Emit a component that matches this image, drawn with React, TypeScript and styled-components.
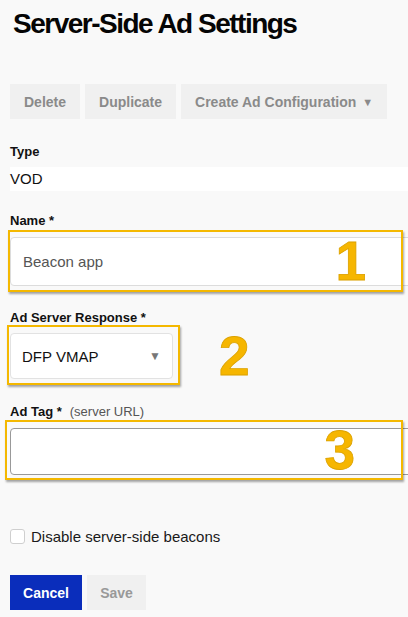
import React from 'react';
import styled, { createGlobalStyle } from 'styled-components';

const GlobalStyle = createGlobalStyle`
    html, body {
        margin: 0;
        padding: 0;
        background: #f9f9f9;
        overflow-x: hidden;
    }
    body {
        font-family: 'Liberation Sans', Arial, sans-serif;
        color: #111;
    }
`;

const Page = styled.div`
    padding: 7px 0 0 10px;
    min-height: 617px;
    box-sizing: border-box;
`;

const Title = styled.h1`
    margin: 0 0 0 3px;
    font-size: 28px;
    line-height: 34px;
    font-weight: 700;
    letter-spacing: -1.5px;
    color: #050505;
`;

const Toolbar = styled.div`
    display: flex;
    gap: 5px;
    margin-top: 43px;
`;

const GhostButton = styled.button`
    height: 35px;
    padding: 0 14px;
    border: none;
    border-radius: 0;
    background: #f0f0f0;
    color: #8a8a8a;
    font-family: 'Liberation Sans', Arial, sans-serif;
    font-size: 14px;
    font-weight: 700;
    display: flex;
    align-items: center;
    gap: 6px;
    cursor: default;
    .caret {
        font-size: 11px;
        color: #8a8a8a;
    }
`;

const Label = styled.div<{ $top: number }>`
    margin-top: ${(p) => p.$top}px;
    font-size: 13px;
    line-height: 16px;
    font-weight: 700;
    color: #111;
    .hint {
        font-weight: 400;
        color: #555;
        margin-left: 8px;
    }
`;

const ReadOnly = styled.div`
    margin-top: 7px;
    height: 24px;
    line-height: 24px;
    background: #fff;
    font-size: 15px;
    color: #111;
`;

const Field = styled.div<{ $top: number }>`
    position: relative;
    margin-top: ${(p) => p.$top}px;
`;

const TextInput = styled.div<{ $h: number; $dark?: boolean }>`
    box-sizing: border-box;
    width: calc(100% + 12px);
    height: ${(p) => p.$h}px;
    background: #fff;
    border: 1px solid ${(p) => (p.$dark ? '#999' : '#dcdcdc')};
    border-radius: 4px;
    padding-left: 12px;
    display: flex;
    align-items: center;
    font-size: 15px;
    color: #555;
`;

const Annotation = styled.div<{ $t: number; $l: number; $r: number; $b: number; $pr: number }>`
    position: absolute;
    top: ${(p) => p.$t}px;
    left: ${(p) => p.$l}px;
    right: ${(p) => p.$r}px;
    bottom: ${(p) => p.$b}px;
    border: 2px solid #f4b800;
    box-shadow: 1px 2px 2px rgba(0, 0, 0, 0.35);
    display: flex;
    align-items: center;
    justify-content: flex-end;
    padding-right: ${(p) => p.$pr}px;
    pointer-events: none;
`;

const Digit = styled.span`
    font-family: 'Liberation Sans', Arial, sans-serif;
    font-size: 55px;
    line-height: 46px;
    font-weight: 700;
    color: #f6b600;
    -webkit-text-stroke: 0.8px #dca200;
`;

const SelectRow = styled.div`
    display: flex;
    align-items: center;
    gap: 46px;
    height: 46px;
    margin-top: 7px;
`;

const SelectWrap = styled.div`
    position: relative;
`;

const SelectBox = styled.div`
    box-sizing: border-box;
    width: 163px;
    height: 46px;
    background: #fff;
    border: 1px solid #e2e2e2;
    border-radius: 4px;
    display: flex;
    align-items: center;
    justify-content: space-between;
    padding: 0 11px 0 11px;
    font-size: 15px;
    color: #111;
    .arrow {
        font-size: 12px;
        color: #777;
    }
`;

const SelectFrame = styled.div`
    position: absolute;
    top: -8px;
    left: -3px;
    right: -7px;
    bottom: -6px;
    border: 2px solid #f4b800;
    box-shadow: 1px 2px 2px rgba(0, 0, 0, 0.35);
    pointer-events: none;
`;

const CheckRow = styled.label`
    display: flex;
    align-items: center;
    gap: 6px;
    margin-top: 53px;
    font-size: 15px;
    line-height: 17px;
    color: #1a1a1a;
`;

const Check = styled.span`
    width: 15px;
    height: 15px;
    box-sizing: border-box;
    background: #fff;
    border: 1px solid #cfcfcf;
    border-radius: 3px;
`;

const Actions = styled.div`
    display: flex;
    gap: 5px;
    margin-top: 30px;
`;

const PrimaryButton = styled(GhostButton)`
    background: #0a2dbb;
    color: #fff;
    width: 72px;
    justify-content: center;
`;

const SaveButton = styled(GhostButton)`
    width: 59px;
    justify-content: center;
    color: #999;
`;

export default function App() {
    return (
        <>
            <GlobalStyle />
            <Page>
                <Title>Server-Side Ad Settings</Title>
                <Toolbar>
                    <GhostButton>Delete</GhostButton>
                    <GhostButton>Duplicate</GhostButton>
                    <GhostButton>
                        Create Ad Configuration <span className="caret">▼</span>
                    </GhostButton>
                </Toolbar>

                <Label $top={25}>Type</Label>
                <ReadOnly>VOD</ReadOnly>

                <Label $top={22}>Name *</Label>
                <Field $top={8}>
                    <TextInput $h={49}>Beacon app</TextInput>
                    <Annotation $t={-7} $l={-2} $r={5} $b={-6} $pr={35}>
                        <Digit>1</Digit>
                    </Annotation>
                </Field>

                <Label $top={24}>Ad Server Response *</Label>
                <SelectRow>
                    <SelectWrap>
                        <SelectBox>
                            <span>DFP VMAP</span>
                            <span className="arrow">▼</span>
                        </SelectBox>
                        <SelectFrame />
                    </SelectWrap>
                    <Digit>2</Digit>
                </SelectRow>

                <Label $top={25}>
                    Ad Tag *<span className="hint">(server URL)</span>
                </Label>
                <Field $top={8}>
                    <TextInput $h={47} $dark />
                    <Annotation $t={-8} $l={-5} $r={5} $b={-5} $pr={46}>
                        <Digit>3</Digit>
                    </Annotation>
                </Field>

                <CheckRow>
                    <Check />
                    Disable server-side beacons
                </CheckRow>

                <Actions>
                    <PrimaryButton>Cancel</PrimaryButton>
                    <SaveButton>Save</SaveButton>
                </Actions>
            </Page>
        </>
    );
}
